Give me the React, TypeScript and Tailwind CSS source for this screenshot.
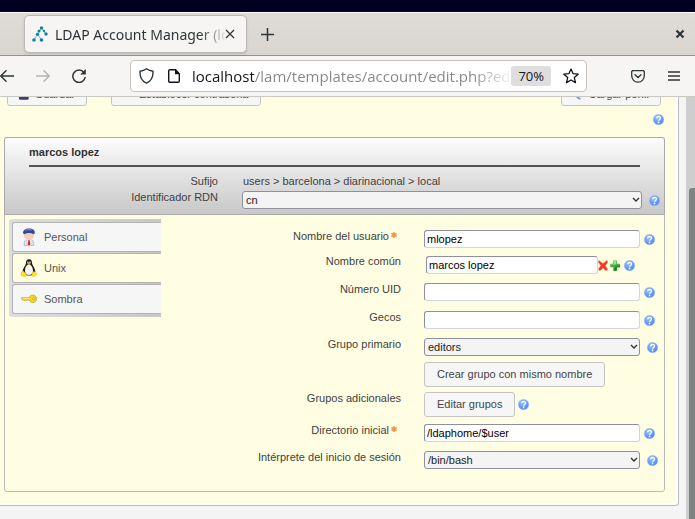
import type { ReactNode } from "react";

function HelpIcon() {
  return (
    <svg viewBox="0 0 24 24" className="size-[11px] shrink-0" aria-hidden="true">
      <defs>
        <radialGradient id="help" cx="0.4" cy="0.3" r="0.75">
          <stop offset="0" stopColor="#9cc2fc" />
          <stop offset="0.6" stopColor="#669bf9" />
          <stop offset="1" stopColor="#4a86f4" />
        </radialGradient>
      </defs>
      <circle cx="12" cy="12" r="11.5" fill="url(#help)" stroke="#a9c7fa" />
      <path d="M7.8 9.200c.2-5 8.600-5.200 8.600-.4 0 3.200-4 3-4.200 6" fill="none" stroke="#fff" strokeWidth="3" />
      <circle cx="12.100" cy="18.500" r="1.900" fill="#fff" />
    </svg>
  );
}

function HelpButton() {
  return (
    <button type="button" aria-label="Ayuda" className="flex shrink-0">
      <HelpIcon />
    </button>
  );
}

function LogoIcon() {
  return (
    <svg viewBox="0 0 16 16" className="size-4 shrink-0" aria-hidden="true">
      <path d="M9.500 2 5.500 8 2 14M5.500 8 9.500 14M9.500 2l4.500 6" fill="none" stroke="#7ecbd8" strokeWidth="1.200" />
      <g fill="#15829c">
        <circle cx="9.500" cy="1.900" r="1.700" />
        <circle cx="7" cy="5" r="1.500" />
        <circle cx="12" cy="5" r="1.200" />
        <circle cx="5.500" cy="8.300" r="1.600" />
        <circle cx="14" cy="8" r="1.700" />
        <circle cx="2" cy="14" r="1.800" />
        <circle cx="9.500" cy="14" r="1.800" />
      </g>
    </svg>
  );
}

function PersonIcon() {
  return (
    <svg viewBox="0 0 16 18" className="h-[18px] w-4" aria-hidden="true">
      <path d="M3 17.500c0-4 1-6.500 5-6.500s5 2.500 5 6.500z" fill="#dcdee6" stroke="#a5a8b6" strokeWidth=".6" />
      <path d="M5.500 11 8 17.500 10.500 11z" fill="#fff" />
      <path d="M7.400 11.500h1.200l.6 5.500H6.800z" fill="#d8202a" />
      <ellipse cx="8" cy="7.500" rx="5.100" ry="4.200" fill="#f1d0ba" />
      <path d="M2.200 5.600C1.600 2 4.500.5 8 .5s6.500 1.500 5.700 5L12.600 6.200C10 4.600 6 4.600 3.300 6.200z" fill="#36479c" />
      <path d="M4.500 2.600c1.500-1.100 4-1.300 6-.6" fill="none" stroke="#8d9be0" />
    </svg>
  );
}

function PenguinIcon() {
  return (
    <svg viewBox="0 0 16 18" className="h-[18px] w-4" aria-hidden="true">
      <path d="M8 .3c2.200 0 3 1.500 3 3.600 0 2.300 3.300 4.600 3.300 8.600 0 2.600-2 4-6.300 4s-6.300-1.400-6.300-4c0-4 3.300-6.300 3.300-8.600C5 1.800 5.800.3 8 .3z" fill="#1b1b1b" />
      <path d="M7.800 5.600c2.500 0 4.200 3.200 4.200 6.200s-1.500 4.200-4 4.200-4-1.500-4-4.200 1.300-6.200 3.800-6.200z" fill="#f6f6f6" />
      <circle cx="6.900" cy="3.300" r=".8" fill="#fff" />
      <circle cx="9" cy="3.300" r=".8" fill="#fff" />
      <path d="M6 4.600 8 4l2 .7-2 1.500z" fill="#f3c000" />
      <path d="m2 11.800 3.400 3.600c.6 1.800-.6 2.500-2.200 2L.1 16.300c-.5-1.900.3-3.200 1.900-4.500zM11.700 13c1.200-.4 2.200-.3 2.700.6l1.500 1.300c.2.900-2.800 2.800-3.900 2.700-1.500-.4-1.200-3-.3-4.600z" fill="#ffdf2a" stroke="#e8c010" strokeWidth=".6" />
    </svg>
  );
}

function KeyIcon() {
  return (
    <svg viewBox="0 0 17 10" className="h-[10px] w-4" aria-hidden="true">
      <path d="M.6 3.600h8C9.500 1.600 11 .8 12.700.8c2.300 0 3.800 1.700 3.800 4s-1.500 4-3.800 4C11 8.800 9.500 8 8.700 6H6.500L5.600 7l-.9-1-1 1-1-1H1.500L.4 4.800z" fill="#f5d623" stroke="#b89b16" strokeWidth=".7" />
      <path d="M1.500 4.300h7.700" stroke="#fff3a0" strokeWidth=".8" />
      <circle cx="13.700" cy="4.800" r="1.200" fill="#fffbe0" stroke="#a88c10" strokeWidth=".6" />
    </svg>
  );
}

function DeleteIcon() {
  return (
    <svg viewBox="0 0 10 11" className="h-[11px] w-[10px]" aria-hidden="true">
      <path d="m1 .4 4 3L9 .3l.8 2.200L7.400 5.500l2.500 4.300-1.900.9L5 7.900 2 10.800.2 9.500 2.700 5.600.2 2z" fill="#ee3a22" stroke="#f58a78" strokeWidth=".5" />
    </svg>
  );
}

function AddIcon() {
  return (
    <svg viewBox="0 0 10 11" className="h-[11px] w-[10px]" aria-hidden="true">
      <path d="M3.300.5h3.500v3.300h3v3.400h-3v3.600H3.300V7.200h-3V3.800h3z" fill="#3fae3f" />
      <path d="M4 1h2v3.400H1V5h3z" fill="#a5dba5" />
      <path d="M5 7.200 9.800 5v2.200h-3v3.600H3.600z" fill="#12871a" />
    </svg>
  );
}

const fieldLook = "h-[18px] w-full rounded-[3px] border border-[#8f8f9d] text-[11px] leading-4 outline-none";

function TextBox({ id, value = "" }: { id: string; value?: string }) {
  return (
    <input
      id={id}
      type="text"
      defaultValue={value}
      className={`${fieldLook} border-r-[#d4d4dc] border-b-[#d4d4dc] bg-white px-0.5 text-black`}
    />
  );
}

function Picker({ id, value }: { id: string; value: string }) {
  return (
    <div className="relative w-full">
      <select id={id} defaultValue={value} className={`${fieldLook} block appearance-none bg-[#f4f4f4] px-[3px] text-[#222]`}>
        <option>{value}</option>
      </select>
      <svg viewBox="0 0 8 6" className="pointer-events-none absolute top-1.5 right-0.5 h-1.5 w-2" aria-hidden="true">
        <path d="m1 1 3 3 3-3" fill="none" stroke="#333" strokeWidth="1.400" />
      </svg>
    </div>
  );
}

function Required() {
  return (
    <svg viewBox="0 0 8 8" className="mt-1 mr-1 ml-0.5 size-[6px]" aria-label="obligatorio">
      <path d="M4 0v8M.5 2l7 4M.5 6l7-4" stroke="#f79646" strokeWidth="2" />
    </svg>
  );
}

function Row({
  label,
  id,
  required,
  height,
  children,
}: {
  label?: string;
  id?: string;
  required?: boolean;
  height: string;
  children: ReactNode;
}) {
  return (
    <div className={`flex gap-[23px] ${height}`}>
      <div className="flex w-[240px] shrink-0 justify-end leading-4">
        {label && <label htmlFor={id}>{label}</label>}
        {required && <Required />}
      </div>
      <div className="flex flex-1 items-start pt-0.5">{children}</div>
    </div>
  );
}

function Line({ gap = "pl-1", children }: { gap?: string; children: ReactNode }) {
  return (
    <div className="flex flex-1 items-center">
      {children}
      <div className={`w-6 shrink-0 pt-px ${gap}`}>
        <HelpButton />
      </div>
    </div>
  );
}

const buttonLook = "h-[25px] rounded-[3px] border border-[#c5c5c5] bg-[#f6f6f6] text-[11px] text-[#454545]";

const tabs = [
  { name: "Personal", icon: <PersonIcon />, active: false },
  { name: "Unix", icon: <PenguinIcon />, active: true },
  { name: "Sombra", icon: <KeyIcon />, active: false },
];

function BrowserChrome() {
  return (
    <header className="shrink-0 font-['Open_Sans',sans-serif] text-[#2e3436]">
      <div className="h-3 bg-[#000022]" />
      <div className="flex h-11 items-center border-t border-b border-t-white border-b-[#96938f] bg-linear-to-b from-[#dfdcd8] to-[#d9d5d1] pr-2.5 pl-6">
        <div className="flex h-[38px] w-[223px] items-center rounded-[5px] border border-[#bdb9b8] bg-[#f6f5f4] pr-[11px] pl-[7px] shadow-sm">
          <LogoIcon />
          <span className="ml-[7px] flex-1 overflow-hidden font-['Noto_Sans',sans-serif] text-[14px] whitespace-nowrap [mask-image:linear-gradient(to_right,black_145px,transparent_172px)]">
            LDAP Account Manager (localhost)
          </span>
          <button type="button" aria-label="Cerrar pestaña">
            <svg viewBox="0 0 10 10" className="size-[10px]">
              <path d="m1 1 8 8M9 1 1 9" stroke="#2e3436" strokeWidth="1.200" />
            </svg>
          </button>
        </div>
        <button type="button" aria-label="Nueva pestaña" className="ml-3.5">
          <svg viewBox="0 0 13 13" className="size-[13px]">
            <path d="M6.500 0v13M0 6.500h13" stroke="#2e3436" strokeWidth="1.500" />
          </svg>
        </button>
        <button type="button" aria-label="Cerrar ventana" className="ml-auto">
          <svg viewBox="0 0 10 10" className="size-[10px]">
            <path d="m1.500 1.500 7 7M8.500 1.500l-7 7" stroke="#2e3436" strokeWidth="2.200" />
          </svg>
        </button>
      </div>
      <nav className="flex h-[41px] items-center border-b border-[#cbc7c3] bg-[#f6f5f4] pr-[15px]">
        <button type="button" aria-label="Atrás">
          <svg viewBox="0 0 14 14" className="size-3.5">
            <path d="M14 7H1M6.500 1.200.8 7l5.700 5.800" fill="none" stroke="#2e3436" strokeWidth="1.400" />
          </svg>
        </button>
        <button type="button" aria-label="Adelante" className="ml-[22px]">
          <svg viewBox="0 0 14 14" className="size-3.5">
            <path d="M0 7h13M7.500 1.200 13.200 7l-5.700 5.800" fill="none" stroke="#b4b4b2" strokeWidth="1.400" />
          </svg>
        </button>
        <button type="button" aria-label="Recargar" className="ml-[22px]">
          <svg viewBox="0 0 14 14" className="size-3.5">
            <path d="M12 3.500A6.200 6.200 0 1 0 13.200 8" fill="none" stroke="#2e3436" strokeWidth="1.500" />
            <path d="M13.800 0v5.600H8.200z" fill="#2e3436" />
          </svg>
        </button>
        <div className="ml-[44px] flex h-8 flex-1 items-center rounded-[4px] border border-[#c6c2be] bg-white pr-[7px] pl-2">
          <svg viewBox="0 0 15 16" className="h-4 w-[15px]" aria-hidden="true">
            <path d="M7.500.8C5.500 2.300 3.300 3 1 3.200c-.3 5.800 1.500 9.800 6.500 12 5-2.200 6.800-6.200 6.500-12-2.300-.2-4.500-.9-6.500-2.400z" fill="none" stroke="#2e3436" strokeWidth="1.400" strokeLinejoin="round" />
          </svg>
          <svg viewBox="0 0 12 14" className="ml-3.5 h-3.5 w-3" aria-hidden="true">
            <path d="M2 .7h5.500l3.800 4V12c0 .8-.5 1.300-1.300 1.300H2C1.200 13.300.7 12.800.7 12V2C.7 1.200 1.200.7 2 .7z" fill="none" stroke="#15141a" strokeWidth="1.400" />
            <path d="M7 0v5.200h5z" fill="#15141a" />
          </svg>
          <input
            type="text"
            aria-label="Dirección"
            defaultValue="localhost/lam/templates/account/edit.php?editing"
            className="ml-3 w-0 flex-1 bg-[linear-gradient(to_right,#15141a_62px,#86868a_62px,#86868a_280px,transparent_322px)] bg-clip-text text-[15px] text-transparent outline-none"
          />
          <button type="button" className="h-5 rounded-[3px] bg-[#dedede] px-[7px] text-[13px] leading-5 text-[#15141a]">
            70%
          </button>
          <button type="button" aria-label="Añadir a marcadores" className="ml-3">
            <svg viewBox="0 0 16 16" className="size-4">
              <path d="m8 1 2.100 4.700 5.100.5-3.900 3.400 1.200 5L8 12l-4.500 2.600 1.200-5L.8 6.200l5.100-.5z" fill="none" stroke="#15141a" strokeWidth="1.300" strokeLinejoin="round" />
            </svg>
          </button>
        </div>
        <button type="button" aria-label="Pocket" className="ml-11">
          <svg viewBox="0 0 14 13" className="h-[13px] w-3.5">
            <path d="M1.500.7h11l.8.8v4C13.300 9.500 10.500 12.200 7 12.200S.7 9.500.7 5.500v-4z" fill="none" stroke="#2e3436" strokeWidth="1.300" />
            <path d="m4 4.800 3 2.700 3-2.700" fill="none" stroke="#2e3436" strokeWidth="1.400" strokeLinecap="round" />
          </svg>
        </button>
        <button type="button" aria-label="Menú" className="ml-[23px]">
          <svg viewBox="0 0 12 10" className="h-[10px] w-3">
            <path d="M0 1h12M0 5h12M0 9h12" stroke="#2e3436" strokeWidth="1.300" />
          </svg>
        </button>
      </nav>
    </header>
  );
}

export default function App() {
  return (
    <div className="flex h-screen flex-col overflow-hidden bg-[#f4f4f4]">
      <BrowserChrome />
      <div className="flex min-h-0 flex-1 font-['Liberation_Sans',Arial,sans-serif] text-[11px] text-[#3f3f3f]">
        <main className="min-w-0 flex-1 overflow-hidden pr-[7px]">
          <div className="-mt-4 rounded-br-[4px] border-r border-b border-[#bcbcbc] bg-white pr-0.5 pb-0.5">
            <div className="bg-[#fffee2] pr-[11px] pb-[11px] pl-1">
              <div className="flex items-center pr-1 pl-[3px]">
                <button type="button" className={`${buttonLook} flex w-20 items-center gap-1.5 px-[11px] pt-0.5`}>
                  <svg viewBox="0 0 10 10" className="size-[10px]" aria-hidden="true">
                    <rect width="10" height="10" rx="1" fill="#3d3d72" />
                    <rect x="2" width="6" height="4" fill="#e8e8f4" />
                  </svg>
                  Guardar
                </button>
                <button type="button" className={`${buttonLook} ml-6 flex w-[150px] items-center gap-1.5 px-[11px] pt-0.5`}>
                  <svg viewBox="0 0 10 10" className="size-[10px]" aria-hidden="true">
                    <circle cx="7" cy="3" r="2" fill="none" stroke="#d9b824" strokeWidth="1.500" />
                  </svg>
                  <span className="whitespace-nowrap">Establecer contraseña</span>
                </button>
                <button type="button" className={`${buttonLook} ml-auto flex w-[100px] items-center gap-1.5 px-[11px] pt-0.5`}>
                  <svg viewBox="0 0 10 10" className="size-[10px]" aria-hidden="true">
                    <path d="M8 1a4 4 0 1 0 0 8" fill="none" stroke="#5b93f8" strokeWidth="2" />
                  </svg>
                  <span className="whitespace-nowrap">Cargar perfil</span>
                </button>
              </div>
              <div className="flex justify-end py-2 pr-px">
                <HelpButton />
              </div>

              <section className="mt-1 rounded-[3px] border border-[#bcbcbc] bg-[#fffee2]">
                <div className="-m-px rounded-t-[3px] border border-[#aaa] bg-linear-to-b from-[#fdfdfd] to-[#c8c8c8] pb-[5px] pl-6">
                  <h1 className="mr-6 border-b-2 border-[#555] pt-[7px] pb-1.5 text-[11px] leading-[14px] font-bold text-[#333]">
                    marcos lopez
                  </h1>
                  <div className="grid grid-cols-[189px_1fr] gap-x-6 pt-1.5 leading-4">
                    <span className="text-right">Sufijo</span>
                    <span className="pl-px">users &gt; barcelona &gt; diarinacional &gt; local</span>
                    <label htmlFor="rdn" className="text-right">
                      Identificador RDN
                    </label>
                    <div className="flex items-center pt-0.5">
                      <Picker id="rdn" value="cn" />
                      <div className="w-[22px] shrink-0 pt-px pl-[7px]">
                        <HelpButton />
                      </div>
                    </div>
                  </div>
                </div>

                <div className="flex items-start pt-[5px] pb-3.5">
                  <nav className="ml-1 flex w-[152px] shrink-0 flex-col gap-px rounded-l-[3px] bg-linear-to-r from-[#dedede] to-[#c8c8c8] py-[3px] pl-[3px]">
                    {tabs.map((tab) => (
                      <a
                        key={tab.name}
                        href={`#${tab.name}`}
                        className={`flex h-[30px] items-center rounded-l-[3px] border-y border-l border-[#b4b4b4] pl-2 text-[#555] ${tab.active ? "bg-[#fffee2]" : "bg-[#f6f6f6]"}`}
                      >
                        <span className="flex w-[23px]">{tab.icon}</span>
                        {tab.name}
                      </a>
                    ))}
                  </nav>
                  <form className="min-w-0 flex-1 pt-[9px]">
                    <Row label="Nombre del usuario" id="user" required height="h-[25px]">
                      <Line>
                        <TextBox id="user" value="mlopez" />
                      </Line>
                    </Row>
                    <Row label="Nombre común" id="cn" height="h-7">
                      <div className="flex flex-1 items-center px-0.5 pt-px pr-[29px]">
                        <TextBox id="cn" value="marcos lopez" />
                        <button type="button" aria-label="Eliminar">
                          <DeleteIcon />
                        </button>
                        <button type="button" aria-label="Añadir" className="mr-1 ml-0.5">
                          <AddIcon />
                        </button>
                        <HelpButton />
                      </div>
                    </Row>
                    <Row label="Número UID" id="uid" height="h-7">
                      <Line>
                        <TextBox id="uid" />
                      </Line>
                    </Row>
                    <Row label="Gecos" id="gecos" height="h-[27px]">
                      <Line>
                        <TextBox id="gecos" />
                      </Line>
                    </Row>
                    <Row label="Grupo primario" id="group" height="h-6">
                      <Line gap="pl-[7px]">
                        <Picker id="group" value="editors" />
                      </Line>
                    </Row>
                    <Row height="h-[30px]">
                      <button type="button" className={`${buttonLook} px-3`}>
                        Crear grupo con mismo nombre
                      </button>
                    </Row>
                    <Row label="Grupos adicionales" id="groups" height="h-8">
                      <div className="flex items-center gap-[3px]">
                        <button id="groups" type="button" className={`${buttonLook} px-3`}>
                          Editar grupos
                        </button>
                        <HelpButton />
                      </div>
                    </Row>
                    <Row label="Directorio inicial" id="home" required height="h-[27px]">
                      <Line>
                        <TextBox id="home" value="/ldaphome/$user" />
                      </Line>
                    </Row>
                    <Row label="Intérprete del inicio de sesión" id="shell" height="h-7">
                      <Line gap="pl-[7px]">
                        <Picker id="shell" value="/bin/bash" />
                      </Line>
                    </Row>
                  </form>
                </div>
              </section>
            </div>
          </div>
        </main>
        <div className="w-[9px] shrink-0 bg-[#cecece] pt-[91px] pl-[3px]">
          <div className="h-full rounded-tl-[3px] bg-[#7f8483]" />
        </div>
      </div>
    </div>
  );
}
